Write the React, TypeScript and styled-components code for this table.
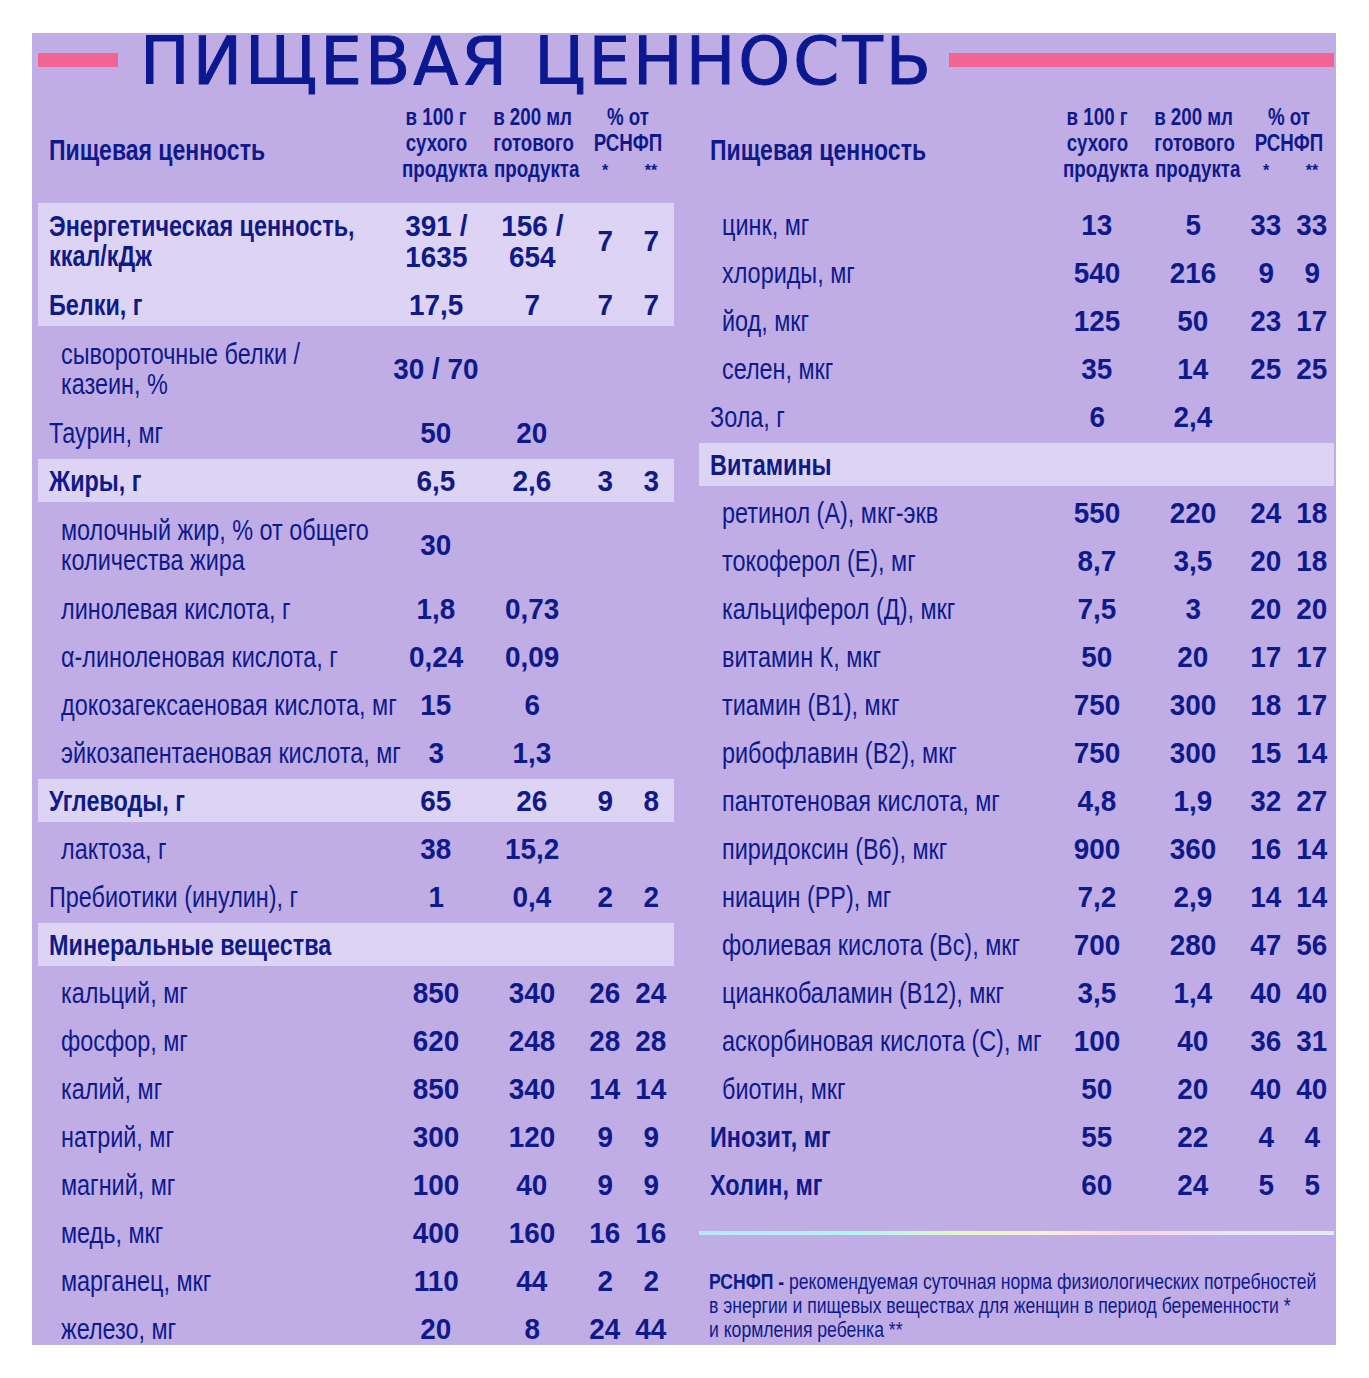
import styled, { createGlobalStyle } from 'styled-components'

const NAVY = '#0e1a8c'
const PURPLE = '#c0ade6'
const LIGHT = '#ddd3f4'
const PINK = '#f26494'
const FONT = `"Liberation Sans", Arial, sans-serif`
// the artwork uses a condensed face; none is installed, so text is narrowed
const NARROW = 0.78

type Kind = 'main' | 'bold' | 'sub'

interface Item {
  label: string
  kind: Kind
  values?: string[]
  tall?: boolean
}

interface Block {
  hl?: boolean
  rows: Item[]
}

const sub = (label: string, ...values: string[]): Item => ({ label, kind: 'sub', values })

const LEFT: Block[] = [
  {
    hl: true,
    rows: [
      {
        label: 'Энергетическая ценность,\nккал/кДж',
        kind: 'bold',
        values: ['391 /\n1635', '156 /\n654', '7', '7'],
        tall: true,
      },
      { label: 'Белки, г', kind: 'bold', values: ['17,5', '7', '7', '7'] },
    ],
  },
  { rows: [{ label: 'сывороточные белки /\nказеин, %', kind: 'sub', values: ['30 / 70'], tall: true }] },
  { rows: [{ label: 'Таурин, мг', kind: 'main', values: ['50', '20'] }] },
  { hl: true, rows: [{ label: 'Жиры, г', kind: 'bold', values: ['6,5', '2,6', '3', '3'] }] },
  {
    rows: [
      { label: 'молочный жир, % от общего\nколичества жира', kind: 'sub', values: ['30'], tall: true },
      sub('линолевая кислота, г', '1,8', '0,73'),
      sub('α-линоленовая кислота, г', '0,24', '0,09'),
      sub('докозагексаеновая кислота, мг', '15', '6'),
      sub('эйкозапентаеновая кислота, мг', '3', '1,3'),
    ],
  },
  { hl: true, rows: [{ label: 'Углеводы, г', kind: 'bold', values: ['65', '26', '9', '8'] }] },
  {
    rows: [
      sub('лактоза, г', '38', '15,2'),
      { label: 'Пребиотики (инулин), г', kind: 'main', values: ['1', '0,4', '2', '2'] },
    ],
  },
  { hl: true, rows: [{ label: 'Минеральные вещества', kind: 'bold' }] },
  {
    rows: [
      sub('кальций, мг', '850', '340', '26', '24'),
      sub('фосфор, мг', '620', '248', '28', '28'),
      sub('калий, мг', '850', '340', '14', '14'),
      sub('натрий, мг', '300', '120', '9', '9'),
      sub('магний, мг', '100', '40', '9', '9'),
      sub('медь, мкг', '400', '160', '16', '16'),
      sub('марганец, мкг', '110', '44', '2', '2'),
      sub('железо, мг', '20', '8', '24', '44'),
    ],
  },
]

const RIGHT: Block[] = [
  {
    rows: [
      sub('цинк, мг', '13', '5', '33', '33'),
      sub('хлориды, мг', '540', '216', '9', '9'),
      sub('йод, мкг', '125', '50', '23', '17'),
      sub('селен, мкг', '35', '14', '25', '25'),
      { label: 'Зола, г', kind: 'main', values: ['6', '2,4'] },
    ],
  },
  { hl: true, rows: [{ label: 'Витамины', kind: 'bold' }] },
  {
    rows: [
      sub('ретинол (А), мкг-экв', '550', '220', '24', '18'),
      sub('токоферол (Е), мг', '8,7', '3,5', '20', '18'),
      sub('кальциферол (Д), мкг', '7,5', '3', '20', '20'),
      sub('витамин К, мкг', '50', '20', '17', '17'),
      sub('тиамин (В1), мкг', '750', '300', '18', '17'),
      sub('рибофлавин (В2), мкг', '750', '300', '15', '14'),
      sub('пантотеновая кислота, мг', '4,8', '1,9', '32', '27'),
      sub('пиридоксин (В6), мкг', '900', '360', '16', '14'),
      sub('ниацин (РР), мг', '7,2', '2,9', '14', '14'),
      sub('фолиевая кислота (Вс), мкг', '700', '280', '47', '56'),
      sub('цианкобаламин (В12), мкг', '3,5', '1,4', '40', '40'),
      sub('аскорбиновая кислота (С), мг', '100', '40', '36', '31'),
      sub('биотин, мкг', '50', '20', '40', '40'),
      { label: 'Инозит, мг', kind: 'bold', values: ['55', '22', '4', '4'] },
      { label: 'Холин, мг', kind: 'bold', values: ['60', '24', '5', '5'] },
    ],
  },
]

const GlobalStyle = createGlobalStyle`
  html, body {
    margin: 0;
    padding: 0;
    background: #ffffff;
  }
  body {
    font-family: ${FONT};
    color: ${NAVY};
  }
`

const COLS = '352px 92px 100px 46px 46px'

const Page = styled.div`
  width: 1369px;
  height: 1378px;
  padding: 33px 0 0 32px;
  box-sizing: border-box;
`

const Panel = styled.div`
  width: 1304px;
  height: 1312px;
  background: ${PURPLE};
  overflow: hidden;
`

const TitleRow = styled.div`
  height: 67px;
  display: flex;
  align-items: flex-start;
  padding: 0 2px 0 6px;
  gap: 22px;
`

const PinkBar = styled.div<{ $grow?: boolean }>`
  margin-top: 20px;
  height: 14px;
  background: ${PINK};
  width: ${({ $grow }) => ($grow ? 'auto' : '80px')};
  flex: ${({ $grow }) => ($grow ? 1 : '0 0 auto')};
`

const Title = styled.h1`
  margin: -4px -7px 0 0;
  font-family: "DejaVu Sans", "Liberation Sans", sans-serif;
  font-weight: 400;
  font-size: 66px;
  line-height: 66px;
  letter-spacing: 3px;
  color: #0b1890;
  white-space: nowrap;
  -webkit-text-stroke: 1px #0b1890;
`

const Columns = styled.div`
  display: flex;
  gap: 25px;
  padding: 0 2px 0 6px;
`

const Column = styled.div<{ $width: number }>`
  width: ${({ $width }) => $width}px;
  display: flex;
  flex-direction: column;
  flex-shrink: 0;
`

const Narrow = styled.span<{ $origin?: string; $scale?: number }>`
  display: inline-block;
  white-space: pre;
  transform: scaleX(${({ $scale }) => $scale ?? NARROW});
  transform-origin: ${({ $origin }) => $origin ?? 'left'} center;
`

const Header = styled.div`
  height: 100px;
  flex-shrink: 0;
  display: grid;
  grid-template-columns: ${COLS};
  grid-template-rows: 26px 26px 26px;
  padding-top: 4px;
  box-sizing: border-box;
  font-weight: 700;
`

const HeaderLabel = styled.div`
  grid-row: 1 / span 3;
  align-self: center;
  padding: 14px 0 0 11px;
  font-size: 29.5px;
  line-height: 32px;
`

const HeaderCell = styled.div<{ $col: string; $row: number; $small?: boolean }>`
  grid-column: ${({ $col }) => $col};
  grid-row: ${({ $row }) => $row};
  text-align: center;
  font-size: ${({ $small }) => ($small ? '16px' : '24px')};
  line-height: ${({ $small }) => ($small ? '30px' : '26px')};
  white-space: nowrap;
`

const Band = styled.div<{ $hl?: boolean }>`
  flex-shrink: 0;
  background: ${({ $hl }) =>
    $hl ? `linear-gradient(${LIGHT}, ${LIGHT}) 0 3px / 100% calc(100% - 5px) no-repeat` : 'none'};
`

const Row = styled.div<{ $tall?: boolean }>`
  height: ${({ $tall }) => ($tall ? 80 : 48)}px;
  display: grid;
  grid-template-columns: ${COLS};
  align-items: center;
`

const Label = styled.div<{ $kind: Kind }>`
  padding: 1px 0 0 ${({ $kind }) => ($kind === 'sub' ? 23 : 11)}px;
  font-weight: ${({ $kind }) => ($kind === 'bold' ? 700 : 400)};
  font-size: 30px;
  line-height: 30px;
`

const Value = styled.div`
  padding-top: 1px;
  font-weight: 700;
  font-size: 30px;
  line-height: 31px;
  text-align: center;
  white-space: pre;
`

const Divider = styled.div`
  margin: 23px 0 0;
  height: 4px;
  flex-shrink: 0;
  background: linear-gradient(
    90deg,
    #b9e6fb 0%,
    #b3f4f0 25%,
    #e6f6c8 42%,
    #fbeedd 55%,
    #f8d5e6 68%,
    #e8e4f6 82%,
    #e4ebfa 100%
  );
`

const Footnote = styled.p`
  margin: 35px 0 0 10px;
  font-size: 22px;
  line-height: 24px;

  b {
    font-weight: 700;
  }
`

const TableHeader = () => (
  <Header>
    <HeaderLabel>
      <Narrow>Пищевая ценность</Narrow>
    </HeaderLabel>
    {[
      ['2', 1, 'в 100 г'],
      ['2', 2, 'сухого'],
      ['2', 3, 'продукта'],
      ['3', 1, 'в 200 мл'],
      ['3', 2, 'готового'],
      ['3', 3, 'продукта'],
      ['4 / span 2', 1, '% от'],
      ['4 / span 2', 2, 'РСНФП'],
    ].map(([col, row, text]) => (
      <HeaderCell key={`${col}-${row}`} $col={col as string} $row={row as number}>
        <Narrow $origin="center">{text}</Narrow>
      </HeaderCell>
    ))}
    <HeaderCell $col="4" $row={3} $small>
      *
    </HeaderCell>
    <HeaderCell $col="5" $row={3} $small>
      **
    </HeaderCell>
  </Header>
)

const Blocks = ({ blocks }: { blocks: Block[] }) => (
  <>
    {blocks.map((block, i) => (
      <Band key={i} $hl={block.hl}>
        {block.rows.map((row) => (
          <Row key={row.label} $tall={row.tall}>
            <Label $kind={row.kind}>
              <Narrow>{row.label}</Narrow>
            </Label>
            {(row.values ?? []).map((v, j) => (
              <Value key={j}>
                <Narrow $origin="center" $scale={0.93}>
                  {v}
                </Narrow>
              </Value>
            ))}
          </Row>
        ))}
      </Band>
    ))}
  </>
)

const App = () => (
  <Page>
    <GlobalStyle />
    <Panel>
      <TitleRow>
        <PinkBar />
        <Title>ПИЩЕВАЯ ЦЕННОСТЬ</Title>
        <PinkBar $grow />
      </TitleRow>
      <Columns>
        <Column $width={636}>
          <TableHeader />
          <Blocks blocks={LEFT} />
        </Column>
        <Column $width={635}>
          <TableHeader />
          <Blocks blocks={RIGHT} />
          <Divider />
          <Footnote>
            <Narrow $scale={0.8}>
              <b>РСНФП -</b> рекомендуемая суточная норма физиологических потребностей
              {'\n'}в энергии и пищевых веществах для женщин в период беременности *
              {'\n'}и кормления ребенка **
            </Narrow>
          </Footnote>
        </Column>
      </Columns>
    </Panel>
  </Page>
)

export default App
